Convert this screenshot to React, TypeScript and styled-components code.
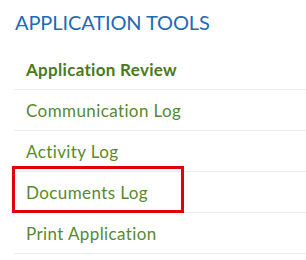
import React from 'react';
import styled, { createGlobalStyle } from 'styled-components';

const GlobalStyle = createGlobalStyle`
  body {
    margin: 0;
    background: #fff;
    font-family: Lato, 'Open Sans', sans-serif;
  }
`;

const Panel = styled.nav`
  width: 306px;
  height: 260px;
  padding: 12px 0 0 14px;
  box-sizing: border-box;
  overflow: hidden;
`;

const Title = styled.h2`
  margin: 0 0 0 1px;
  font-size: 20px;
  font-weight: 400;
  line-height: 20px;
  letter-spacing: -0.1px;
  color: #1d6ab6;
`;

const List = styled.ul`
  list-style: none;
  margin: 17px 0 0;
  padding: 0;
`;

const Item = styled.li`
  position: relative;
  height: 41px;
  box-sizing: border-box;
  display: flex;
  align-items: center;
  padding-left: 12px;
  border-bottom: 1px solid #ececec;
`;

const Link = styled.a<{ $active?: boolean }>`
  font-size: 17px;
  font-weight: ${(p) => (p.$active ? 700 : 400)};
  letter-spacing: ${(p) => (p.$active ? '0.3px' : '0.4px')};
  color: ${(p) => (p.$active ? '#4a7a1c' : '#578a2c')};
  text-decoration: none;
`;

const Highlight = styled.span`
  position: absolute;
  left: -2px;
  top: -6px;
  width: 172px;
  height: 47px;
  border: 3px solid #e2000a;
  box-sizing: border-box;
  pointer-events: none;
`;

const items = [
  { label: 'Application Review', active: true },
  { label: 'Communication Log' },
  { label: 'Activity Log' },
  { label: 'Documents Log', highlight: true },
  { label: 'Print Application' },
];

const App = () => {
  return (
    <>
      <GlobalStyle />
      <Panel>
        <Title>APPLICATION TOOLS</Title>
        <List>
          {items.map((it) => (
            <Item key={it.label}>
              <Link href="#" $active={it.active}>
                {it.label}
              </Link>
              {it.highlight && <Highlight />}
            </Item>
          ))}
        </List>
      </Panel>
    </>
  );
};

export default App;
